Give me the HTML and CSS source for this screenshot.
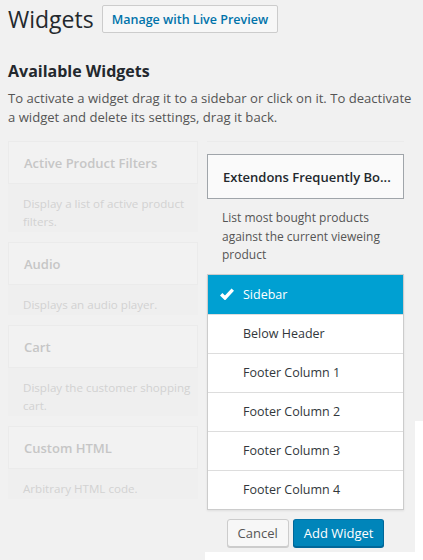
FILE: index.html
```html
<!DOCTYPE html>
<html>
<head>
<meta charset="utf-8">
<link rel="stylesheet" href="styles.css">
</head>
<body>
<div class="artifact"></div>
<div class="wrap">
  <div class="header">
    <h1 class="title">Widgets</h1>
    <a class="btn-live">Manage with Live Preview</a>
  </div>
  <h2 class="subtitle">Available Widgets</h2>
  <p class="intro">To activate a widget drag it to a sidebar or click on it. To deactivate a widget and delete its settings, drag it back.</p>
  <div class="cols">
    <div class="left">
      <div class="widget">
        <div class="w-title">Active Product Filters</div>
        <div class="w-desc">Display a list of active product filters.</div>
      </div>
      <div class="widget">
        <div class="w-title">Audio</div>
        <div class="w-desc">Displays an audio player.</div>
      </div>
      <div class="widget">
        <div class="w-title">Cart</div>
        <div class="w-desc">Display the customer shopping cart.</div>
      </div>
      <div class="widget">
        <div class="w-title">Custom HTML</div>
        <div class="w-desc">Arbitrary HTML code.</div>
      </div>
    </div>
    <div class="right">
      <div class="r-title">Extendons Frequently Bo...</div>
      <div class="r-desc">List most bought products against the current vieweing product</div>
      <ul class="chooser">
        <li class="item selected">
          <svg class="check" viewBox="0 0 14 12" width="14" height="12"><path d="M1.2 6.2 L5 10 L12.8 1.6" fill="none" stroke="#fff" stroke-width="3.4" stroke-linecap="butt" stroke-linejoin="miter"/></svg>
          <span>Sidebar</span>
        </li>
        <li class="item"><span>Below Header</span></li>
        <li class="item"><span>Footer Column 1</span></li>
        <li class="item"><span>Footer Column 2</span></li>
        <li class="item"><span>Footer Column 3</span></li>
        <li class="item"><span>Footer Column 4</span></li>
      </ul>
      <div class="actions">
        <a class="btn btn-cancel">Cancel</a>
        <a class="btn btn-add">Add Widget</a>
      </div>
    </div>
  </div>
</div>
</body>
</html>
```
FILE: styles.css
```css
html, body {
  margin: 0;
  padding: 0;
}
body {
  background: #f1f1f1;
  font-family: "Open Sans", "Noto Sans", sans-serif;
  color: #23282d;
  width: 423px;
  height: 560px;
  overflow: hidden;
  position: relative;
}
.artifact {
  position: absolute;
  left: 205px;
  top: 421px;
  width: 218px;
  height: 139px;
  box-sizing: border-box;
  background: #f1f1f1;
  border-right: 8px solid #fff;
  border-bottom: 8px solid #fff;
  z-index: 0;
}
.wrap {
  position: relative;
  z-index: 1;
  padding: 0 7px 0 8px;
}
.header {
  display: flex;
  align-items: center;
  padding-top: 5px;
  height: 28px;
}
.title {
  margin: 0;
  font-size: 23px;
  font-weight: 400;
  line-height: 28px;
  color: #23282d;
}
.btn-live {
  margin-left: 8px;
  box-sizing: border-box;
  height: 28px;
  padding: 0 9px;
  display: flex;
  align-items: center;
  border: 1px solid #ccc;
  border-radius: 2px;
  background: #f7f7f7;
  color: #0073aa;
  font-size: 12.5px;
  font-weight: 600;
}
.subtitle {
  margin: 27px 0 0;
  font-size: 16px;
  font-weight: 700;
  line-height: 22px;
  color: #23282d;
}
.intro {
  margin: 7px 0 0;
  font-size: 13.1px;
  line-height: 19px;
  color: #555;
}
.cols {
  display: flex;
  gap: 9px;
  margin-top: 14px;
}
.left {
  width: 190px;
  display: flex;
  flex-direction: column;
  gap: 10px;
}
.widget {
  display: flex;
  flex-direction: column;
}
.w-title {
  height: 43px;
  box-sizing: border-box;
  border: 1px solid #ebebeb;
  background: #f2f2f2;
  display: flex;
  align-items: center;
  padding-left: 15px;
  font-size: 13px;
  font-weight: 600;
  color: #c6c6c6;
}
.w-desc {
  padding: 11px 2px 1px 15px;
  background: #efefef;
  font-size: 11.6px;
  line-height: 18px;
  color: #d2d2d2;
}
.right {
  width: 197px;
  padding-top: 12px;
  border-top: 1px solid #ebebeb;
  display: flex;
  flex-direction: column;
}
.r-title {
  height: 45px;
  box-sizing: border-box;
  border: 1px solid #a0a5aa;
  background: #fafafa;
  display: flex;
  align-items: center;
  padding-left: 15px;
  font-size: 13px;
  font-weight: 600;
  color: #23282d;
  white-space: nowrap;
}
.r-desc {
  padding: 10px 15px 9px;
  font-size: 12px;
  line-height: 18.5px;
  color: #555;
}
.chooser {
  list-style: none;
  margin: 0;
  padding: 0;
  border: 1px solid #ccc;
  background: #fff;
  box-shadow: 0 1px 2px rgba(0,0,0,0.08);
}
.item {
  height: 38px;
  display: flex;
  align-items: center;
  padding-left: 35px;
  font-size: 12.5px;
  color: #32373c;
  border-top: 1px solid #ddd;
  position: relative;
}
.item:first-child {
  border-top: none;
}
.item.selected {
  background: #00a0d2;
  color: #fff;
  height: 39px;
}
.check {
  position: absolute;
  left: 12px;
  top: 13px;
}
.actions {
  display: flex;
  justify-content: center;
  gap: 4px;
  margin-top: 9px;
}
.btn {
  box-sizing: border-box;
  height: 28px;
  padding: 0 10px;
  display: flex;
  align-items: center;
  border-radius: 3px;
  font-size: 13px;
  border: 1px solid #ccc;
}
.btn-cancel {
  background: #f7f7f7;
  color: #555;
  box-shadow: 0 1px 0 #ccc;
}
.btn-add {
  background: #0085ba;
  border-color: #0073aa #006799 #006799;
  color: #fff;
  box-shadow: 0 1px 0 #006799;
}
```
